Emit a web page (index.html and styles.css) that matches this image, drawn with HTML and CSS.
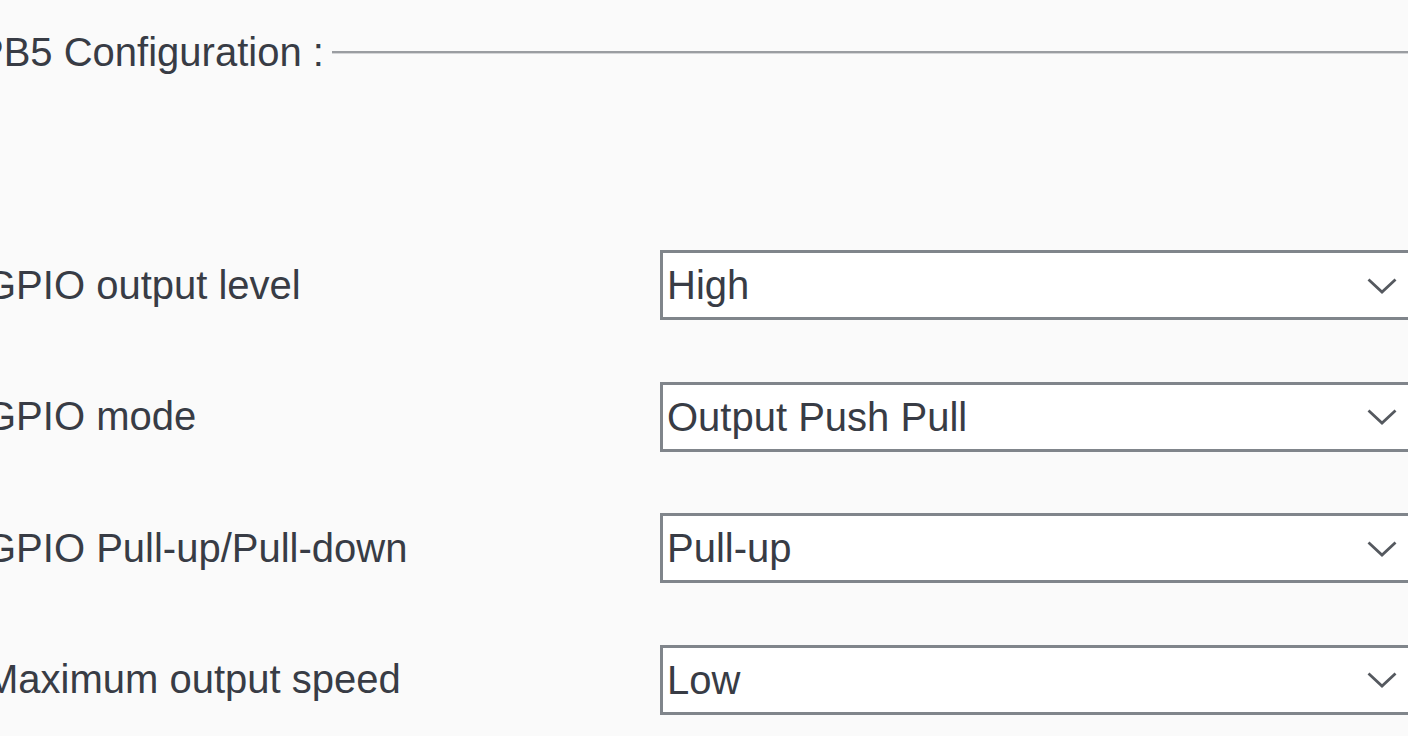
FILE: index.html
```html
<!DOCTYPE html>
<html>
<head>
<meta charset="utf-8">
<link rel="stylesheet" href="styles.css">
</head>
<body>
<div class="page">
  <div class="legend">
    <span class="legend-text">PB5 Configuration :</span>
    <span class="legend-line"></span>
  </div>
  <div class="rows">
    <div class="row">
      <span class="label">GPIO output level</span>
      <div class="select"><span class="value">High</span><svg class="chev" width="30" height="16" viewBox="0 0 30 16"><polyline points="1.5,1.5 15,14 28.5,1.5" fill="none" stroke="#55595f" stroke-width="2.8"/></svg></div>
    </div>
    <div class="row">
      <span class="label">GPIO mode</span>
      <div class="select"><span class="value">Output Push Pull</span><svg class="chev" width="30" height="16" viewBox="0 0 30 16"><polyline points="1.5,1.5 15,14 28.5,1.5" fill="none" stroke="#55595f" stroke-width="2.8"/></svg></div>
    </div>
    <div class="row">
      <span class="label">GPIO Pull-up/Pull-down</span>
      <div class="select"><span class="value">Pull-up</span><svg class="chev" width="30" height="16" viewBox="0 0 30 16"><polyline points="1.5,1.5 15,14 28.5,1.5" fill="none" stroke="#55595f" stroke-width="2.8"/></svg></div>
    </div>
    <div class="row">
      <span class="label">Maximum output speed</span>
      <div class="select"><span class="value">Low</span><svg class="chev" width="30" height="16" viewBox="0 0 30 16"><polyline points="1.5,1.5 15,14 28.5,1.5" fill="none" stroke="#55595f" stroke-width="2.8"/></svg></div>
    </div>
  </div>
</div>
</body>
</html>
```
FILE: styles.css
```css
html, body {
  margin: 0;
  padding: 0;
  background: #fafafa;
  overflow: hidden;
}
body {
  width: 1408px;
  height: 736px;
  font-family: "Liberation Sans", Arial, sans-serif;
  font-size: 40px;
  color: #383c45;
}
.page {
  margin-left: -18px;
  padding-top: 28px;
}
.legend {
  display: flex;
  align-items: center;
  height: 48px;
}
.legend-text {
  margin-left: -5px;
  line-height: 48px;
  white-space: nowrap;
}
.legend-line {
  flex: 1;
  height: 3px;
  margin-left: 8px;
  margin-right: -30px;
  background: linear-gradient(#9a9da1 0, #9a9da1 2px, #d4d5d7 2px);
}
.rows {
  margin-top: 174px;
  display: flex;
  flex-direction: column;
  gap: 61.5px;
}
.row {
  display: grid;
  grid-template-columns: 678px 1fr;
  align-items: center;
  height: 70px;
}
.label {
  padding-left: 3px;
  white-space: nowrap;
}
.select {
  display: flex;
  align-items: center;
  box-sizing: border-box;
  height: 70px;
  margin-right: -22px;
  border: 3px solid #80858b;
  background: #ffffff;
  padding-left: 4px;
  padding-right: 30px;
}
.value {
  flex: 1;
  line-height: 64px;
  white-space: nowrap;
}
.chev {
  display: block;
  margin-top: 1px;
}
```
